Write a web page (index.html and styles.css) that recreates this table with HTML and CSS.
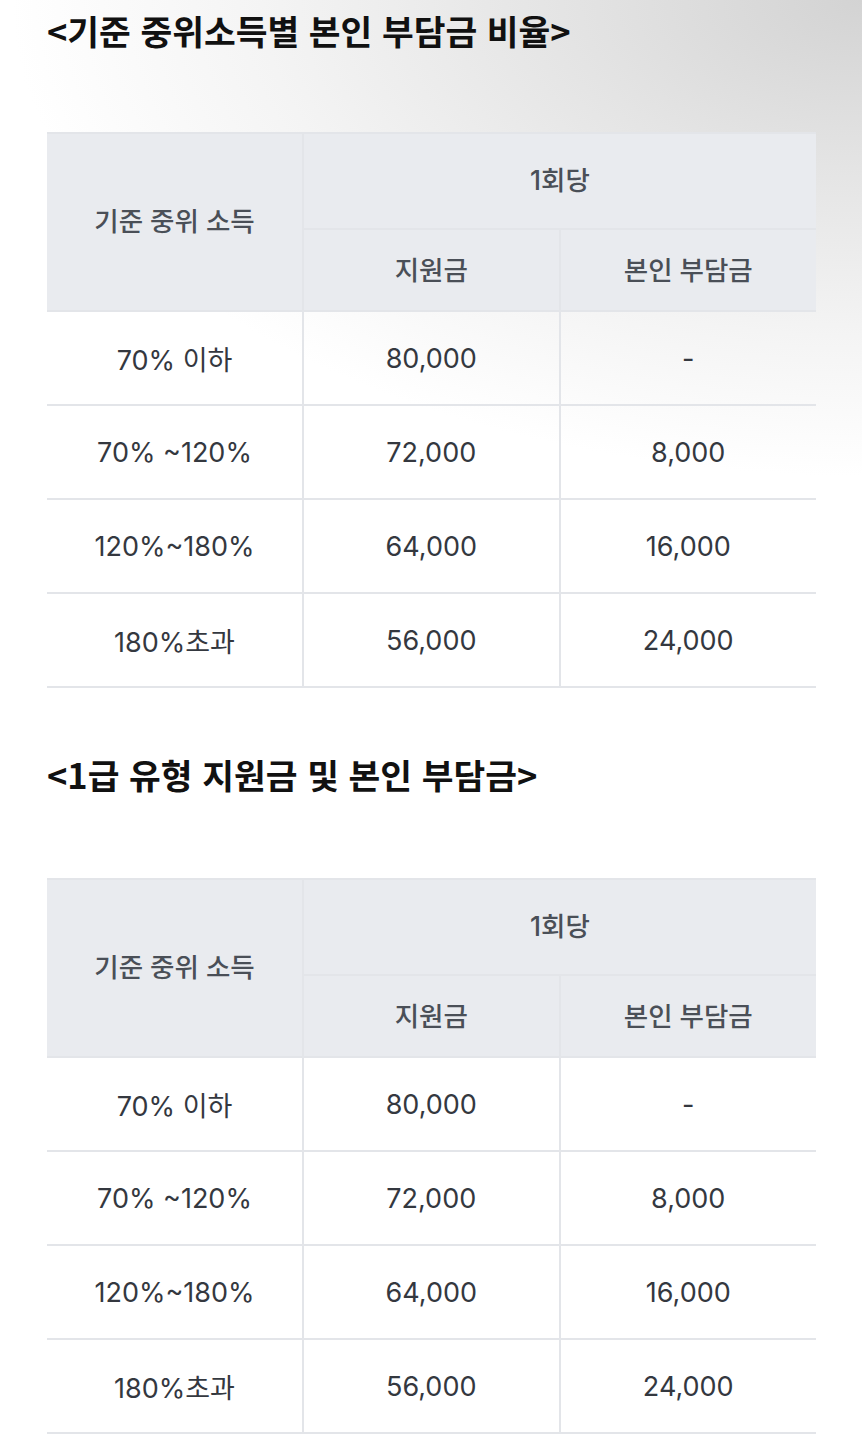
FILE: index.html
```html
<!DOCTYPE html>
<html lang="ko">
<head>
<meta charset="utf-8">
<link rel="stylesheet" href="styles.css">
</head>
<body>
<div class="page">
  <section class="block first">
    <h2 class="title">&lt;기준 중위소득별 본인 부담금 비율&gt;</h2>
    <table class="fee">
      <thead>
        <tr class="h1">
          <th rowspan="2" class="c1">기준 중위 소득</th>
          <th colspan="2">1회당</th>
        </tr>
        <tr class="h2">
          <th>지원금</th>
          <th>본인 부담금</th>
        </tr>
      </thead>
      <tbody>
        <tr><td>70% 이하</td><td>80,000</td><td>-</td></tr>
        <tr><td>70% ~120%</td><td>72,000</td><td>8,000</td></tr>
        <tr><td>120%~180%</td><td>64,000</td><td>16,000</td></tr>
        <tr><td>180%초과</td><td>56,000</td><td>24,000</td></tr>
      </tbody>
    </table>
  </section>
  <section class="block second">
    <h2 class="title">&lt;1급 유형 지원금 및 본인 부담금&gt;</h2>
    <table class="fee">
      <thead>
        <tr class="h1">
          <th rowspan="2" class="c1">기준 중위 소득</th>
          <th colspan="2">1회당</th>
        </tr>
        <tr class="h2">
          <th>지원금</th>
          <th>본인 부담금</th>
        </tr>
      </thead>
      <tbody>
        <tr><td>70% 이하</td><td>80,000</td><td>-</td></tr>
        <tr><td>70% ~120%</td><td>72,000</td><td>8,000</td></tr>
        <tr><td>120%~180%</td><td>64,000</td><td>16,000</td></tr>
        <tr><td>180%초과</td><td>56,000</td><td>24,000</td></tr>
      </tbody>
    </table>
  </section>
</div>
</body>
</html>
```
FILE: styles.css
```css
html, body {
  margin: 0;
  padding: 0;
}
body {
  width: 862px;
  height: 1440px;
  overflow: hidden;
  background:
    radial-gradient(ellipse 1000px 560px at 100% 0%, #d3d3d3 0%, #e4e4e4 30%, #f4f4f4 60%, #ffffff 85%);
  background-repeat: no-repeat;
  background-color: #ffffff;
  font-family: Inter, "Noto Sans CJK KR", sans-serif;
  color: #34383f;
}
.page {
  padding-left: 47px;
  display: flex;
  flex-direction: column;
}
.title {
  margin: 0;
  font-family: "Noto Sans CJK KR", sans-serif;
  font-weight: 700;
  font-size: 34.5px;
  line-height: 42px;
  color: #111111;
}
.first .title {
  padding-top: 9px;
}
.first .fee {
  margin-top: 81px;
}
.second {
  margin-top: 65px;
}
.second .fee {
  margin-top: 83px;
}
.fee {
  border-collapse: collapse;
  width: 769px;
  table-layout: fixed;
}
.fee th, .fee td {
  text-align: center;
  vertical-align: middle;
  padding: 0;
  font-size: 27px;
  border: 2px solid #e3e5e9;
}
.fee th:last-child, .fee td:last-child {
  border-right: none;
}
.fee th:first-child, .fee td:first-child {
  border-left: none;
}
.fee th {
  background: #e9ebef;
  font-weight: 500;
  font-size: 26.5px;
  color: #4a4f57;
}
.fee .c1 {
  width: 255px;
}
.fee .h1 th {
  height: 89px;
  padding-bottom: 5px;
}
.fee .h2 th {
  height: 76px;
  padding-bottom: 4px;
}
.fee td {
  height: 92px;
  color: #34383f;
  background: transparent;
}
```
